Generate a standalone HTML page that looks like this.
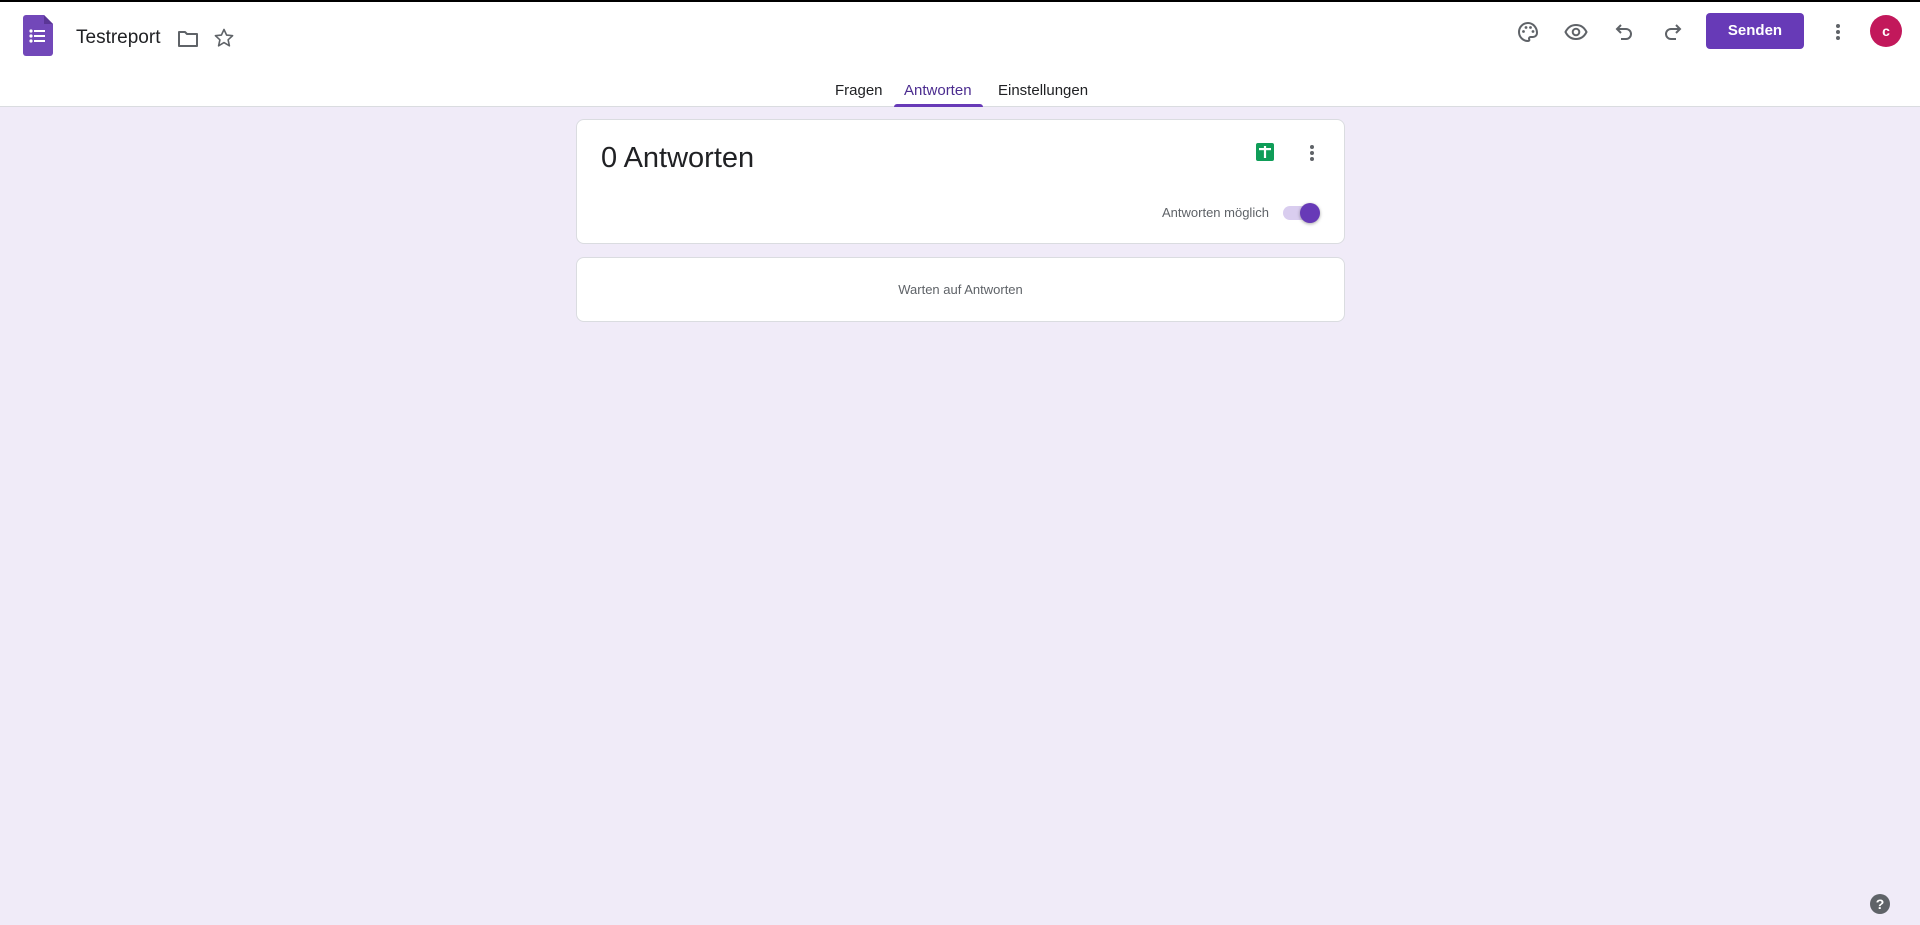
<!DOCTYPE html>
<html><head><meta charset="utf-8"><style>
*{box-sizing:border-box;margin:0;padding:0}
body{width:1920px;height:925px;background:#f0ebf8;font-family:"Liberation Sans",Arial,sans-serif;position:relative;overflow:hidden}
.hdr{position:absolute;left:0;top:0;width:1920px;height:107px;background:#fff;border-top:2px solid #000;border-bottom:1px solid #dadce0}
.abs{position:absolute}
.tab{position:absolute;top:80px;font-size:15px;color:#202124}
.card{position:absolute;left:576px;width:769px;background:#fff;border:1px solid #dadce0;border-radius:8px}
</style></head><body>
<div class="hdr">
<svg class="abs" style="left:23px;top:13px" width="30" height="41" viewBox="0 0 30 41"><path d="M3 0h18l9 9v29a3 3 0 0 1-3 3H3a3 3 0 0 1-3-3V3a3 3 0 0 1 3-3z" fill="#7248b9"/><path d="M21 0l9 9h-9z" fill="#5a3696"/><g fill="#fff"><circle cx="8" cy="16" r="1.6"/><circle cx="8" cy="21" r="1.6"/><circle cx="8" cy="26" r="1.6"/><rect x="11" y="15" width="11" height="2"/><rect x="11" y="20" width="11" height="2"/><rect x="11" y="25" width="11" height="2"/></g></svg>
<div class="abs" style="left:76px;top:25px;font-size:19px;color:#202124">Testreport</div>
<svg class="abs" style="left:176px;top:25px" width="24" height="24" viewBox="0 0 24 24"><path d="M3 5h6l2 2h10v12H3z" fill="none" stroke="#5f6368" stroke-width="2" stroke-linejoin="round"/></svg>
<svg class="abs" style="left:212px;top:24px" width="24" height="24" viewBox="0 0 24 24"><path d="M12 3.5l2.6 5.6 6 .6-4.5 4.1 1.3 6-5.4-3.2-5.4 3.2 1.3-6L3.4 9.7l6-.6z" fill="none" stroke="#5f6368" stroke-width="1.6" stroke-linejoin="round"/></svg>
<svg class="abs" style="left:1516px;top:18px" width="24" height="24" viewBox="0 0 24 24"><path d="M12 3a9 9 0 0 0 0 18c1.2 0 1.6-.8 1.2-1.6-.5-.9 0-2.4 1.5-2.4H17a4 4 0 0 0 4-4c0-5.5-4-10-9-10z" fill="none" stroke="#5f6368" stroke-width="2"/><g fill="#5f6368"><circle cx="7.5" cy="11.5" r="1.4"/><circle cx="10" cy="7.5" r="1.4"/><circle cx="14.5" cy="7.5" r="1.4"/><circle cx="17" cy="11.5" r="1.4"/></g></svg>
<svg class="abs" style="left:1564px;top:18px" width="24" height="24" viewBox="0 0 24 24"><path d="M1.5 12C4 7 8 5 12 5s8 2 10.5 7C20 17 16 19 12 19s-8-2-10.5-7z" fill="none" stroke="#5f6368" stroke-width="2"/><circle cx="12" cy="12" r="3.3" fill="none" stroke="#5f6368" stroke-width="2"/></svg>
<svg class="abs" style="left:1613px;top:18px" width="24" height="24" viewBox="0 0 24 24"><path d="M8 5L4 9l4 4M4 9h9a5 5 0 0 1 0 10H8" fill="none" stroke="#5f6368" stroke-width="2"/></svg>
<svg class="abs" style="left:1660px;top:18px" width="24" height="24" viewBox="0 0 24 24"><path d="M16 5l4 4-4 4M20 9h-9a5 5 0 0 0 0 10h5" fill="none" stroke="#5f6368" stroke-width="2"/></svg>
<div class="abs" style="left:1706px;top:11px;width:98px;height:36px;background:#673ab7;border-radius:4px;color:#fff;font-size:15px;font-weight:bold;text-align:center;line-height:36px">Senden</div>
<svg class="abs" style="left:1832px;top:18px" width="12" height="24" viewBox="0 0 12 24"><g fill="#5f6368"><circle cx="6" cy="6" r="2"/><circle cx="6" cy="12" r="2"/><circle cx="6" cy="18" r="2"/></g></svg>
<div class="abs" style="left:1870px;top:13px;width:32px;height:32px;border-radius:50%;background:#c2185b;color:#fff;font-size:14px;font-weight:bold;text-align:center;line-height:32px">c</div>
<div class="tab" style="left:835px">Fragen</div>
<div class="tab" style="left:904px;color:#4b2c8f">Antworten</div>
<div class="tab" style="left:998px">Einstellungen</div>
<div class="abs" style="left:894px;top:102px;width:89px;height:3px;background:#673ab7;border-radius:3px 3px 0 0"></div>
</div>
<div class="card" style="top:119px;height:125px">
<div class="abs" style="left:24px;top:22px;font-size:29px;color:#202124">0 Antworten</div>
<svg class="abs" style="left:679px;top:23px" width="18" height="18" viewBox="0 0 18 18"><rect width="18" height="18" rx="2" fill="#0f9d58"/><rect x="3" y="5" width="12" height="2.2" fill="#fff"/><rect x="7.9" y="3" width="2.2" height="12" fill="#fff"/></svg>
<svg class="abs" style="left:729px;top:21px" width="12" height="24" viewBox="0 0 12 24"><g fill="#5f6368"><circle cx="6" cy="6" r="2"/><circle cx="6" cy="12" r="2"/><circle cx="6" cy="18" r="2"/></g></svg>
<div class="abs" style="left:585px;top:85px;font-size:13px;color:#5f6368">Antworten möglich</div>
<div class="abs" style="left:706px;top:86px;width:34px;height:14px;border-radius:7px;background:#d9cdef"></div>
<div class="abs" style="left:723px;top:83px;width:20px;height:20px;border-radius:50%;background:#673ab7;box-shadow:0 1px 3px rgba(0,0,0,.35)"></div>
</div>
<div class="card" style="top:257px;height:65px">
<div style="text-align:center;font-size:13px;color:#5f6368;line-height:63px">Warten auf Antworten</div>
</div>
<div class="abs" style="left:1870px;top:894px;width:20px;height:20px;border-radius:50%;background:#5f6368;color:#fff;font-size:14px;font-weight:bold;text-align:center;line-height:20px">?</div>
</body></html>
